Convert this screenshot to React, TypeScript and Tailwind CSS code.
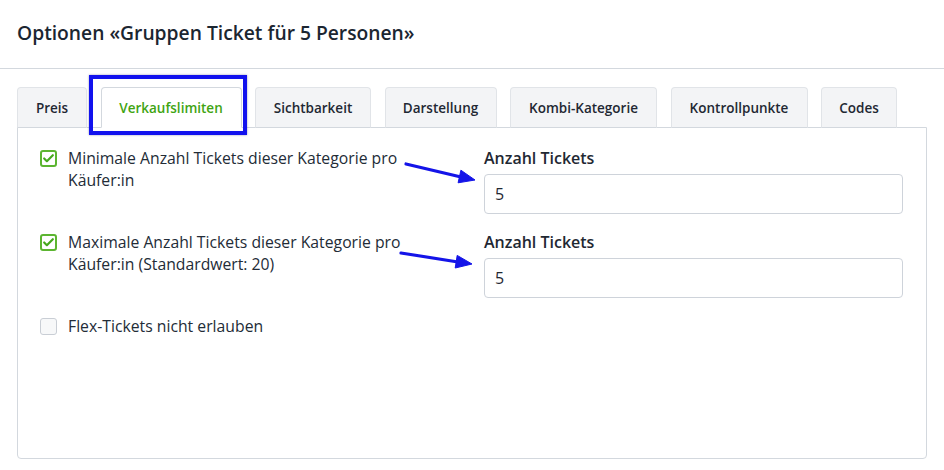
import { Check } from 'lucide-react';

const tabs = [
  { label: 'Preis', w: 'w-[70px]' },
  { label: 'Verkaufslimiten', w: 'w-[141px]', active: true },
  { label: 'Sichtbarkeit', w: 'w-[116px]' },
  { label: 'Darstellung', w: 'w-[112px]' },
  { label: 'Kombi-Kategorie', w: 'w-[147px]' },
  { label: 'Kontrollpunkte', w: 'w-[137px]' },
  { label: 'Codes', w: 'w-[76px]' },
];

function Checkbox({ checked }: { checked?: boolean }) {
  return checked ? (
    <span className="mt-[3px] w-[17px] h-[17px] shrink-0 rounded-[3px] border-2 border-[#5cb531] bg-white flex items-center justify-center">
      <Check className="w-[13px] h-[13px] text-[#45a81c]" strokeWidth={4} />
    </span>
  ) : (
    <span className="mt-[3px] w-[17px] h-[17px] shrink-0 rounded-[3px] border border-[#c9ced5] bg-[#f7f8f9]" />
  );
}

function Field() {
  return (
    <div>
      <div className="text-[16px] leading-[22px] font-semibold text-[#1f2833]">Anzahl Tickets</div>
      <div className="mt-[5px] h-[40px] border border-[#ced3da] rounded-[4px] px-[10px] flex items-center text-[16px] text-[#1f2833]">
        5
      </div>
    </div>
  );
}

export default function App() {
  return (
    <div className="relative w-[944px] h-[470px] bg-white font-['Open_Sans','Liberation_Sans',sans-serif] text-[#232c37]">
      {/* Header */}
      <h1 className="h-[69px] px-[17px] pt-[19px] text-[19.25px] leading-[28px] font-semibold text-[#1b2631] border-b border-[#d3d8de]">
        Optionen «Gruppen Ticket für 5 Personen»
      </h1>

      <div className="px-[17px] pt-[18px]">
        {/* Tabs */}
        <div className="relative z-10 -mb-px flex gap-[13.5px]">
          {tabs.map((t) => (
            <div
              key={t.label}
              className={`${t.w} h-[41px] pt-[2px] rounded-t-[4px] border flex items-center justify-center text-[13.5px] font-semibold ${
                t.active
                  ? 'bg-white border-[#d3d8de] border-b-white text-[#3fa412]'
                  : 'bg-[#f3f4f6] border-[#e1e4e8] border-b-[#d3d8de] text-[#1f2833]'
              }`}
            >
              {t.label}
            </div>
          ))}
        </div>

        {/* Panel */}
        <div className="h-[332px] border border-[#d3d8de] rounded-b-[4px] pl-[22px] pr-[23px] pt-[19px]">
          <div className="grid grid-cols-[419px_419px] gap-x-[25px] gap-y-[17px]">
            <div className="flex gap-[11px] text-[15.75px] leading-[22px]">
              <Checkbox checked />
              <span>Minimale Anzahl Tickets dieser Kategorie pro Käufer:in</span>
            </div>
            <Field />

            <div className="flex gap-[11px] text-[15.75px] leading-[22px]">
              <Checkbox checked />
              <span>Maximale Anzahl Tickets dieser Kategorie pro Käufer:in (Standardwert: 20)</span>
            </div>
            <Field />

            <div className="col-span-2 flex gap-[11px] text-[15.75px] leading-[22px]">
              <Checkbox />
              <span>Flex-Tickets nicht erlauben</span>
            </div>
          </div>
        </div>
      </div>

      {/* Annotation: highlight box */}
      <div className="absolute left-[89px] top-[75px] w-[158px] h-[60px] border-4 border-[#1212ee] shadow-[0_0_2px_rgba(0,0,80,0.4)] z-20" />

      {/* Annotation: arrows */}
      <svg className="absolute left-0 top-0 z-20 pointer-events-none" width="944" height="470" viewBox="0 0 944 470">
        <g fill="#1414e8" stroke="#1414e8">
          <line x1="406" y1="164" x2="461" y2="177" strokeWidth="3.2" strokeLinecap="round" />
          <polygon points="475,180 458.1,182.8 460.9,170.2" strokeWidth="1" strokeLinejoin="round" />
          <line x1="401" y1="253" x2="458" y2="262" strokeWidth="3.2" strokeLinecap="round" />
          <polygon points="472,264 455.2,268 457.2,255.4" strokeWidth="1" strokeLinejoin="round" />
        </g>
      </svg>
    </div>
  );
}
